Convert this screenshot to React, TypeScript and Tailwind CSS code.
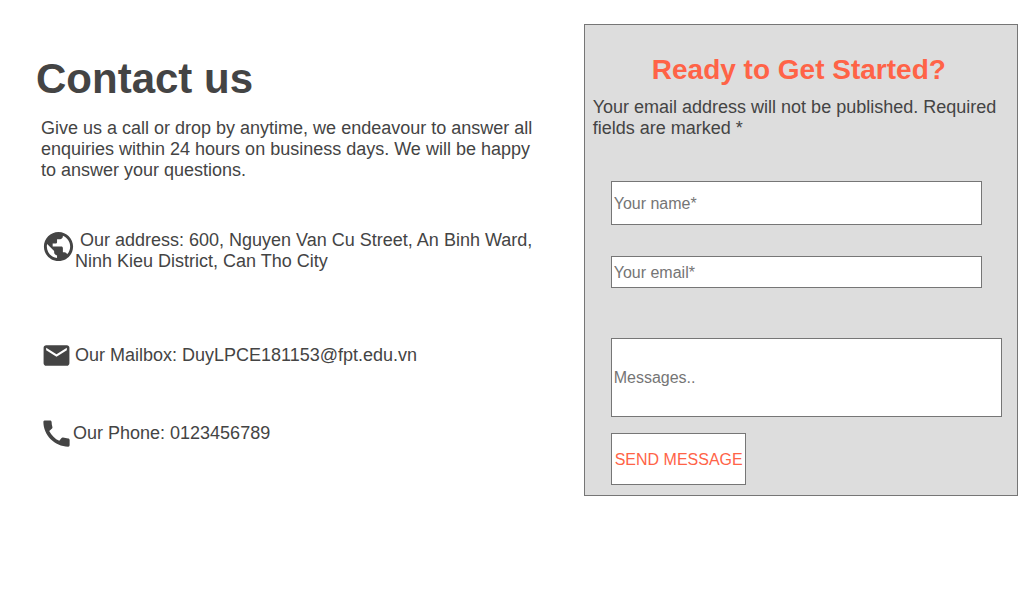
import { MdCall, MdEmail, MdPublic } from "react-icons/md";

const fieldClass =
  "block border border-[#767676] bg-white px-0.5 text-base leading-normal text-[#444444] placeholder:text-[#757575]";

function ContactDetails() {
  return (
    <section className="pt-14 pr-10 pl-9">
      <h1 className="text-[42px] leading-[46px] font-bold">Contact us</h1>
      <div className="pl-[5px] text-lg leading-[21px]">
        <p className="mt-4">
          Give us a call or drop by anytime, we endeavour to answer all enquiries within 24 hours
          on business days. We will be happy to answer your questions.
        </p>
        <address className="not-italic">
          <div className="mt-12 flex items-start">
            <MdPublic className="size-[35px] shrink-0" aria-hidden="true" />
            <p className="-ml-px pt-px indent-[5px]">
              Our address: 600, Nguyen Van Cu Street, An Binh Ward, Ninh Kieu District, Can Tho City
            </p>
          </div>
          <div className="mt-[68px] flex items-center gap-[3px]">
            <MdEmail className="size-[31px] shrink-0" aria-hidden="true" />
            <p>Our Mailbox: DuyLPCE181153@fpt.edu.vn</p>
          </div>
          <div className="mt-[45px] -ml-0.5 flex items-center">
            <MdCall className="size-[35px] shrink-0" aria-hidden="true" />
            <p className="-ml-px">Our Phone: 0123456789</p>
          </div>
        </address>
      </div>
    </section>
  );
}

function MessageForm() {
  return (
    <form
      className="mt-6 mr-1.5 border border-[#767676] bg-[#dddddd] px-2 pt-[29px] pb-2.5"
      onSubmit={(event) => event.preventDefault()}
    >
      <h2 className="pr-1 text-center text-[28px] leading-8 font-bold text-[#ff6347]">
        Ready to Get Started?
      </h2>
      <p className="mt-[11px] text-lg leading-[21px]">
        Your email address will not be published. Required fields are marked *
      </p>
      <div className="mt-[42px] pr-[7px] pl-[18px]">
        <div className="pr-5">
          <input
            className={`${fieldClass} h-11 w-full pt-0.5`}
            type="text"
            placeholder="Your name*"
            aria-label="Your name"
            required
          />
          <input
            className={`${fieldClass} mt-[31px] h-8 w-full pt-0.5`}
            type="email"
            placeholder="Your email*"
            aria-label="Your email"
            required
          />
        </div>
        <input
          className={`${fieldClass} mt-[50px] h-[79px] w-full`}
          type="text"
          placeholder="Messages.."
          aria-label="Messages"
        />
        <button
          type="submit"
          className="mt-4 block h-[52px] border border-[#767676] bg-white pt-0.5 pr-0.5 pl-[3px] text-base whitespace-nowrap text-[#ff6347]"
        >
          SEND MESSAGE
        </button>
      </div>
    </form>
  );
}

export default function App() {
  return (
    <main className="grid grid-cols-[57fr_43fr] items-start bg-white font-['Liberation_Sans',Arial,sans-serif] text-[#444444]">
      <ContactDetails />
      <MessageForm />
    </main>
  );
}
